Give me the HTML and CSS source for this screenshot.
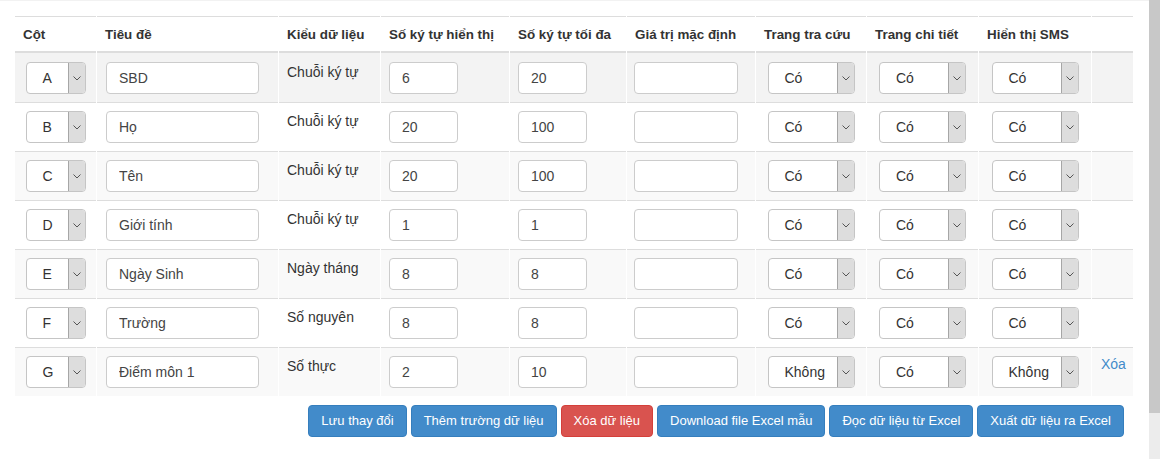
FILE: index.html
```html
<!DOCTYPE html>
<html lang="vi">
<head>
  <meta charset="UTF-8">
  <meta name="viewport" content="width=device-width, initial-scale=1.0">
  <title>Cấu hình trường dữ liệu</title>
  <link rel="stylesheet" href="styles.css">
</head>
<body>

  <div class="page">
    <table class="grid">
      <colgroup>
        <col class="w-col">
        <col class="w-title">
        <col class="w-type">
        <col class="w-show">
        <col class="w-max">
        <col class="w-def">
        <col class="w-yn">
        <col class="w-yn2">
        <col class="w-yn3">
        <col class="w-act">
      </colgroup>
      <thead>
        <tr>
          <th>Cột</th>
          <th>Tiêu đề</th>
          <th>Kiểu dữ liệu</th>
          <th>Số ký tự hiển thị</th>
          <th>Số ký tự tối đa</th>
          <th>Giá trị mặc định</th>
          <th>Trang tra cứu</th>
          <th>Trang chi tiết</th>
          <th>Hiển thị SMS</th>
          <th></th>
        </tr>
      </thead>
      <tbody id="rows"></tbody>
    </table>

    <div class="actions">
      <button class="btn btn-blue">Lưu thay đổi</button>
      <button class="btn btn-blue">Thêm trường dữ liệu</button>
      <button class="btn btn-red">Xóa dữ liệu</button>
      <button class="btn btn-blue">Download file Excel mẫu</button>
      <button class="btn btn-blue">Đọc dữ liệu từ Excel</button>
      <button class="btn btn-blue">Xuất dữ liệu ra Excel</button>
    </div>
  </div>

  <div class="scrollbar"><div class="thumb"></div></div>

  <script>
    // dữ liệu các cột
    const fields = [
      ['A', 'SBD', 'Chuỗi ký tự', '6', '20', 'Có', 'Có', 'Có'],
      ['B', 'Họ', 'Chuỗi ký tự', '20', '100', 'Có', 'Có', 'Có'],
      ['C', 'Tên', 'Chuỗi ký tự', '20', '100', 'Có', 'Có', 'Có'],
      ['D', 'Giới tính', 'Chuỗi ký tự', '1', '1', 'Có', 'Có', 'Có'],
      ['E', 'Ngày Sinh', 'Ngày tháng', '8', '8', 'Có', 'Có', 'Có'],
      ['F', 'Trường', 'Số nguyên', '8', '8', 'Có', 'Có', 'Có'],
      ['G', 'Điểm môn 1', 'Số thực', '2', '10', 'Không', 'Có', 'Không']
    ];

    const arrow = '<span class="sel-btn"><svg width="8" height="5" viewBox="0 0 8 5"><polyline points="0.5,0.5 4,4 7.5,0.5" fill="none" stroke="#555" stroke-width="1"/></svg></span>';

    function sel(val, cls) {
      return '<div class="sel ' + cls + '"><span class="sel-val">' + val + '</span>' + arrow + '</div>';
    }

    const tbody = document.getElementById('rows');
    fields.forEach((f, i) => {
      const tr = document.createElement('tr');
      if (i == 0) tr.className = 'hover';
      tr.innerHTML =
        '<td class="mid">' + sel(f[0], 'sel-sm') + '</td>' +
        '<td><input class="inp inp-title" value="' + f[1] + '"></td>' +
        '<td>' + f[2] + '</td>' +
        '<td><input class="inp inp-num" value="' + f[3] + '"></td>' +
        '<td><input class="inp inp-num" value="' + f[4] + '"></td>' +
        '<td><input class="inp inp-def" value=""></td>' +
        '<td class="mid">' + sel(f[5], '') + '</td>' +
        '<td class="mid">' + sel(f[6], '') + '</td>' +
        '<td class="mid">' + sel(f[7], '') + '</td>' +
        '<td class="act">' + (i == fields.length - 1 ? '<a href="#" class="del">Xóa</a>' : '') + '</td>';
      tbody.appendChild(tr);
    });
  </script>

</body>
</html>
```

FILE: styles.css
```css
body {
  margin: 0;
  height: 459px;
  overflow: hidden;
  display: flex;
  font-family: "Liberation Sans", Arial, sans-serif;
  font-size: 14px;
  line-height: 20px;
  color: #333;
  background: #fff;
}
.page {
  flex: 1;
  border-top: 1px solid #f2f2f2;
  padding: 15px 15px 0 14px;
}

/* bảng */
.grid {
  width: 1120px;
  table-layout: fixed;
  border-collapse: separate;
  border-spacing: 1px 0;
}
.w-col { width: 81px; }
.w-title { width: 181px; }
.w-type { width: 101px; }
.w-show { width: 128px; }
.w-max { width: 116px; }
.w-def { width: 128px; }
.w-yn { width: 110px; }
.w-yn2 { width: 111px; }
.w-yn3 { width: 112px; }
.w-act { width: 41px; }

.grid th {
  text-align: left;
  font-weight: bold;
  font-size: 13.4px;
  padding: 8px 8px 6px;
  border-top: 1px solid #ddd;
  border-bottom: 2px solid #ddd;
  white-space: nowrap;
}
.grid td {
  padding: 8px;
  vertical-align: top;
  border-top: 1px solid #ddd;
}
.grid tbody tr:first-child td {
  border-top: 0;
  padding-top: 9px;
}
.grid tbody tr:nth-child(odd) td { background: #f9f9f9; }
.grid tbody tr.hover td { background: #f3f3f3; }
.grid td.mid { padding-left: 0; padding-right: 0; }
.grid td.act { padding-top: 6px; padding-left: 9px; }

/* ô nhập */
.inp {
  display: block;
  box-sizing: border-box;
  height: 32px;
  padding: 0 12px;
  border: 1px solid #ccc;
  border-radius: 4px;
  background: #fff;
  font-family: inherit;
  font-size: 14px;
  color: #444;
  margin: 0;
}
.inp-title { width: 153px; margin-left: 1px; }
.inp-num { width: 69px; }
.inp-def { width: 104px; margin-left: -1px; }

/* ô chọn */
.sel {
  box-sizing: border-box;
  width: 87px;
  height: 32px;
  margin: 0 auto;
  display: flex;
  border: 1px solid #c5c5c5;
  border-radius: 4px;
  background: #fff;
  overflow: hidden;
}
.sel-sm { width: 60px; }
.sel-val {
  flex: 1;
  padding-left: 16px;
  line-height: 30px;
  color: #333;
}
.sel-btn {
  width: 16px;
  background: #ddd;
  border-left: 1px solid #a6a6a6;
  display: flex;
  align-items: center;
  justify-content: center;
}

.del {
  color: #428bca;
  text-decoration: none;
}

/* nút */
.actions {
  display: flex;
  justify-content: flex-end;
  gap: 4px;
  margin-top: 9px;
  padding-right: 10px;
}
.btn {
  font-family: inherit;
  font-size: 13px;
  line-height: 20px;
  padding: 5px 12px;
  border: 1px solid;
  border-radius: 4px;
  color: #fff;
  cursor: pointer;
}
.btn-blue { background: #428bca; border-color: #357ebd; }
.btn-red { background: #d9534f; border-color: #d43f3a; }

/* thanh cuộn */
.scrollbar {
  width: 11px;
  background: #ececec;
}
.thumb {
  height: 413px;
  background: #c8c8c8;
}
```
